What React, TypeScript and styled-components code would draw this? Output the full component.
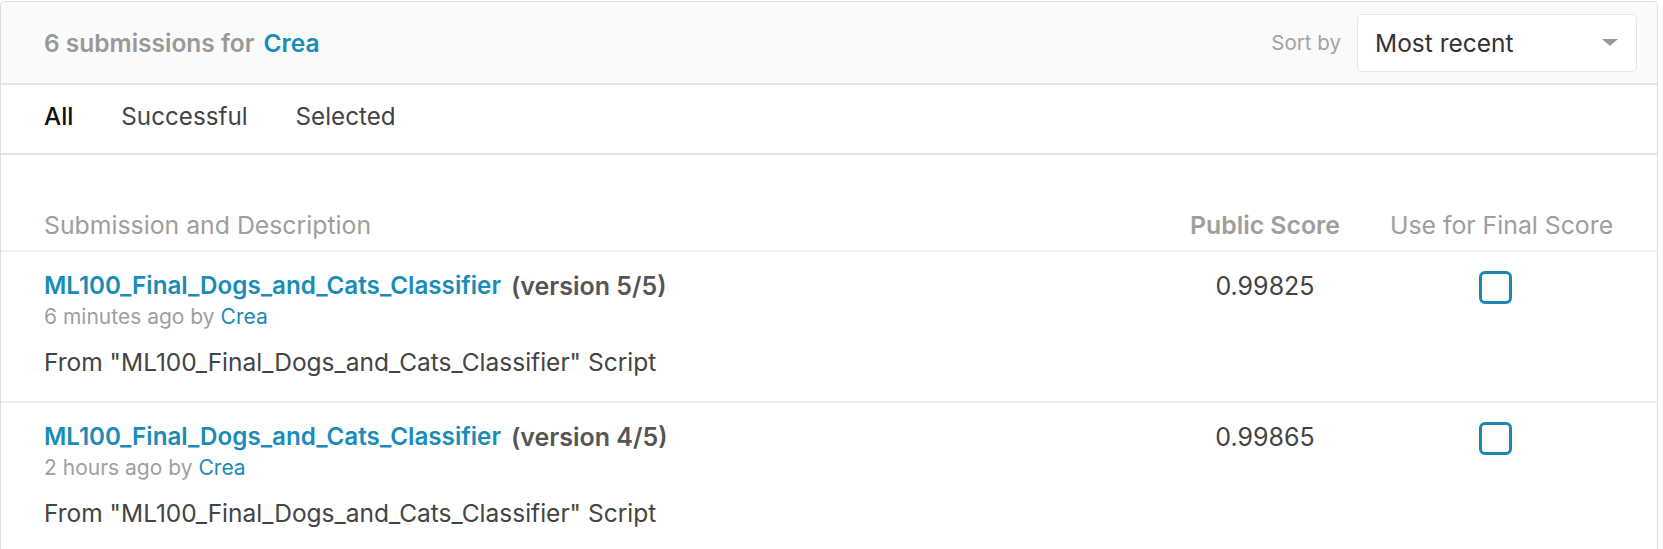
import React from "react";
import styled, { createGlobalStyle } from "styled-components";

const GlobalStyle = createGlobalStyle`
  html, body { margin: 0; padding: 0; background: #ffffff; }
  body { font-family: Inter, "Noto Sans", Arial, sans-serif; }
`;

const Card = styled.div`
  width: 1656px;
  margin-top: 1px;
  border: 1px solid #dedede;
  border-bottom: none;
  border-radius: 5px 5px 0 0;
  background: #fff;
  overflow: hidden;
`;

const Header = styled.div`
  display: flex;
  align-items: center;
  justify-content: space-between;
  height: 81px;
  padding: 0 20px 0 43px;
  background: #fafafa;
  border-bottom: 2px solid #e6e6e6;
`;

const Title = styled.div`
  font-size: 24.5px;
  font-weight: 600;
  color: #999;
  display: flex;
  gap: 9px;
`;

const Link = styled.span<{ $weight?: number }>`
  color: #1a8cb8;
  font-weight: ${(p) => p.$weight ?? 600};
`;

const SortGroup = styled.div`
  display: flex;
  align-items: center;
  gap: 16px;
`;

const SortLabel = styled.span`
  font-size: 20.5px;
  color: #a3a3a3;
`;

const Select = styled.div`
  width: 280px;
  height: 58px;
  box-sizing: border-box;
  border: 1px solid #e6e6e6;
  border-radius: 5px;
  background: #fff;
  display: flex;
  align-items: center;
  justify-content: space-between;
  padding: 0 18px 0 17px;
  font-size: 24.5px;
  color: #333;
`;

const Caret = styled.span`
  width: 0;
  height: 0;
  border-left: 8px solid transparent;
  border-right: 8px solid transparent;
  border-top: 7px solid #9a9a9a;
`;

const Tabs = styled.div`
  display: flex;
  align-items: center;
  gap: 48px;
  height: 70px;
  box-sizing: border-box;
  padding: 0 40px 5px 43px;
  border-bottom: 2px solid #e3e3e3;
`;

const Tab = styled.span<{ $active?: boolean }>`
  font-size: 24.2px;
  color: ${(p) => (p.$active ? "#111" : "#444")};
  font-weight: ${(p) => (p.$active ? 500 : 400)};
`;

const Grid = styled.div`
  display: grid;
  grid-template-columns: 1fr 150px 222px;
  column-gap: 50px;
  padding: 0 45px 0 43px;
`;

const HeadRow = styled(Grid)`
  padding-top: 45px;
  height: 97px;
  box-sizing: border-box;
  align-items: center;
  border-bottom: 2px solid #efefef;
`;

const HeadCell = styled.div<{ $bold?: boolean; $center?: boolean }>`
  font-size: 24.8px;
  color: #9e9e9e;
  font-weight: ${(p) => (p.$bold ? 600 : 400)};
  text-align: ${(p) => (p.$center ? "center" : "left")};
  white-space: nowrap;
`;

const Row = styled(Grid)`
  height: 151px;
  box-sizing: border-box;
  padding-top: 19px;
  align-items: start;
  border-bottom: 2px solid #efefef;
`;

const Main = styled.div`
  display: flex;
  flex-direction: column;
`;

const RowTitle = styled.div`
  font-size: 24.2px;
  line-height: 30px;
  font-weight: 600;
  color: #555;
  display: flex;
  gap: 10px;
`;

const Version = styled.span`
  font-size: 25px;
`;

const Meta = styled.div`
  font-size: 21px;
  line-height: 30px;
  color: #a0a0a0;
  display: flex;
  gap: 6px;
  margin-top: 1px;
`;

const Desc = styled.div`
  margin-top: 15px;
  font-size: 24.5px;
  line-height: 30px;
  color: #444;
`;

const Score = styled.div`
  font-size: 25px;
  line-height: 30px;
  color: #444;
  text-align: center;
`;

const CheckCell = styled.div`
  display: flex;
  justify-content: center;
  padding-right: 12px;
`;

const Checkbox = styled.span`
  width: 33px;
  height: 33px;
  box-sizing: border-box;
  border: 3px solid #1a87b5;
  border-radius: 6px;
`;

const submissions = [
  { version: "5/5", ago: "6 minutes ago", score: "0.99825" },
  { version: "4/5", ago: "2 hours ago", score: "0.99865" },
];

export default function App() {
  return (
    <>
      <GlobalStyle />
      <Card>
        <Header>
          <Title>
            <span>6 submissions for</span>
            <Link>Crea</Link>
          </Title>
          <SortGroup>
            <SortLabel>Sort by</SortLabel>
            <Select>
              <span>Most recent</span>
              <Caret />
            </Select>
          </SortGroup>
        </Header>
        <Tabs>
          <Tab $active>All</Tab>
          <Tab>Successful</Tab>
          <Tab>Selected</Tab>
        </Tabs>
        <HeadRow>
          <HeadCell>Submission and Description</HeadCell>
          <HeadCell $bold $center>Public Score</HeadCell>
          <HeadCell $center>Use for Final Score</HeadCell>
        </HeadRow>
        {submissions.map((s) => (
          <Row key={s.version}>
            <Main>
              <RowTitle>
                <Link>ML100_Final_Dogs_and_Cats_Classifier</Link>
                <Version>(version {s.version})</Version>
              </RowTitle>
              <Meta>
                <span>{s.ago} by</span>
                <Link $weight={400}>Crea</Link>
              </Meta>
              <Desc>From "ML100_Final_Dogs_and_Cats_Classifier" Script</Desc>
            </Main>
            <Score>{s.score}</Score>
            <CheckCell>
              <Checkbox />
            </CheckCell>
          </Row>
        ))}
      </Card>
    </>
  );
}
